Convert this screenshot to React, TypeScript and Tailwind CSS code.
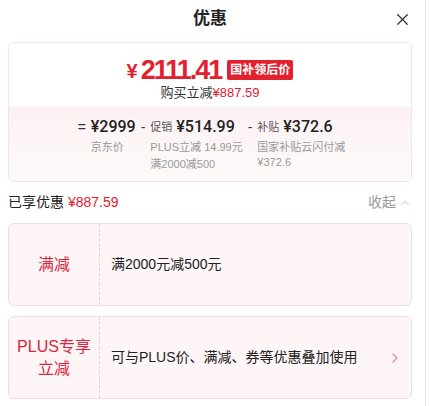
import * as React from "react";
import { X, ChevronUp, ChevronRight } from "lucide-react";

const FONT = { fontFamily: '"Liberation Sans", "Noto Sans CJK SC", sans-serif' };
const NUM = { fontFamily: 'Roboto, "Noto Sans CJK SC", sans-serif' };

interface PartProps {
  op: string;
  label?: string;
  amount: string;
  notes: string[];
  width?: string;
}

const Part = ({ op, label, amount, notes, width }: PartProps) => (
  <div className="flex items-start">
    <span className="text-[14px] leading-[20px] text-[#333] mx-[5px]">{op}</span>
    <div className={`flex flex-col ${width ?? ""}`}>
      <div className="flex items-center h-[20px]">
        {label && <span className="text-[11px] text-[#555] mr-[4px]">{label}</span>}
        <span className="text-[16px] font-medium text-[#222]" style={NUM}>
          {amount}
        </span>
      </div>
      <div className="mt-[3px] flex flex-col gap-[2px]">
        {notes.map((n) => (
          <span key={n} className="text-[11px] leading-[15px] text-[#999]">{n}</span>
        ))}
      </div>
    </div>
  </div>
);

const PromoCard = ({ title, text, arrow }: { title: React.ReactNode; text: string; arrow?: boolean }) => (
  <div className="flex h-[83px] rounded-[6px] border border-[#f1dde0] bg-[#fdf5f6]">
    <div className="w-[91px] flex items-center justify-center text-center text-[16px] leading-[22px] text-[#d9263f] border-r border-dashed border-[#efcdd3]">
      {title}
    </div>
    <div className="flex-1 flex items-center pl-[11px] pr-[8px] text-[14px] text-[#222]">
      <span className="flex-1">{text}</span>
      {arrow && <ChevronRight size={16} strokeWidth={2} className="text-[#e48a9a]" />}
    </div>
  </div>
);

export default function App() {
  return (
    <div className="w-[430px] h-[406px] bg-white overflow-hidden" style={FONT}>
      <div className="w-[426px] h-full border-r border-[#e9e9e9] pl-[8px] pr-[13px]">
        {/* Header */}
        <div className="grid grid-cols-[1fr_auto_1fr] items-center h-[42px] pb-[4px]">
          <div />
          <h1 className="text-[17px] font-bold text-[#222]">优惠</h1>
          <div className="flex justify-end">
            <X size={19} strokeWidth={1.6} className="text-[#333]" />
          </div>
        </div>

        {/* Price summary */}
        <div className="rounded-[6px] border border-[#f0e4e5] overflow-hidden">
          <div className="flex flex-col items-center pt-[13px] pb-[5px] bg-white">
            <div className="flex items-center h-[28px]">
              <span className="text-[20px] font-bold text-[#e3202e] mr-[3px] mt-[2px]">¥</span>
              <span className="text-[27px] font-bold text-[#e3202e] tracking-[-2px]">2111.41</span>
              <span className="ml-[6px] h-[20px] px-[3px] flex items-center rounded-[2px] bg-[#e3202e] text-white text-[12px] font-bold">
                国补领后价
              </span>
            </div>
            <div className="text-[13px] leading-[18px] text-[#333]">
              购买立减<span className="text-[#e3202e]">¥887.59</span>
            </div>
          </div>
          <div className="bg-gradient-to-b from-[#fcf1f2] to-[#fefafa] pt-[10px] pb-[9px] flex justify-center">
            <Part op="=" amount="¥2999" notes={["京东价"]} />
            <Part op="-" label="促销" amount="¥514.99" notes={["PLUS立减 14.99元", "满2000减500"]} />
            <Part op="-" label="补贴" amount="¥372.6" notes={["国家补贴云闪付减 ¥372.6"]} width="w-[90px]" />
          </div>
        </div>

        {/* Saved */}
        <div className="flex items-center justify-between h-[41px]">
          <div className="text-[14px] text-[#222]">
            已享优惠 <span className="text-[#e3202e]">¥887.59</span>
          </div>
          <div className="flex items-center text-[14px] text-[#999]">
            收起
            <ChevronUp size={14} strokeWidth={1.6} className="ml-[2px] text-[#bbb]" />
          </div>
        </div>

        <div className="flex flex-col gap-[10px]">
          <PromoCard title="满减" text="满2000元减500元" />
          <PromoCard
            title={
              <span>
                PLUS专享
                <br />
                立减
              </span>
            }
            text="可与PLUS价、满减、券等优惠叠加使用"
            arrow
          />
        </div>
      </div>
    </div>
  );
}
